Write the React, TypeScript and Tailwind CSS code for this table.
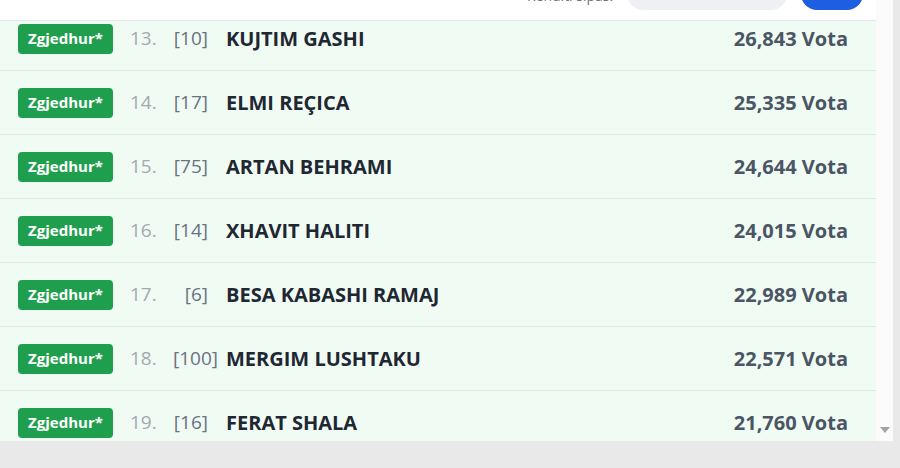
const rows = [
  { n: 13, id: 10, name: "KUJTIM GASHI", votes: "26,843" },
  { n: 14, id: 17, name: "ELMI REÇICA", votes: "25,335" },
  { n: 15, id: 75, name: "ARTAN BEHRAMI", votes: "24,644" },
  { n: 16, id: 14, name: "XHAVIT HALITI", votes: "24,015" },
  { n: 17, id: 6, name: "BESA KABASHI RAMAJ", votes: "22,989" },
  { n: 18, id: 100, name: "MERGIM LUSHTAKU", votes: "22,571" },
  { n: 19, id: 16, name: "FERAT SHALA", votes: "21,760" },
]

function Rreshti({ r }: { r: typeof rows[number] }) {
  return (
    <div className="h-[64px] shrink-0 flex items-center pl-[18px] pr-[28px] bg-[#f0fbf4] border-b border-[#dfe8e2]">
      <span className="w-[95px] h-[30px] shrink-0 rounded-[4px] bg-[#1f9f4d] text-white text-[15px] font-bold flex items-center justify-center">
        Zgjedhur*
      </span>
      <span className="ml-[17px] w-[43px] shrink-0 text-[19px] text-[#a3a9b1]">{r.n}.</span>
      {/* kolona e numrit: djathtas, por [100] del majtas-djathtas si ne origjinal */}
      <span className="inline-block w-[35px] shrink-0 text-right whitespace-nowrap text-[19px] text-[#6b7280]">[{r.id}]</span>
      <span className="ml-[18px] text-[20px] font-bold text-[#1f2733]">{r.name}</span>
      <span className="ml-auto text-[20px] font-bold text-[#4b5563]">{r.votes} Vota</span>
    </div>
  )
}

export default function App() {
  return (
    <div className="w-[900px] h-[468px] bg-[#e9e9e9] overflow-hidden" style={{ fontFamily: '"Open Sans", "Noto Sans", sans-serif' }}>
      <div className="w-[893px] h-[441px] flex bg-white overflow-hidden">
        <div className="w-[876px] h-full flex flex-col overflow-hidden">
          {/* koka e listes, e prere nga lart */}
          <div className="h-[21px] shrink-0 bg-white border-b border-[#e5e7eb] flex items-end justify-end pr-[13px] pb-[10px] gap-[14px] relative z-10">
            <span className="text-[14px] text-[#6b7280] leading-none mb-[7px]">Renditi sipas:</span>
            <span className="h-[32px] px-[18px] rounded-full bg-[#eef0f3] text-[14px] font-semibold text-[#374151] flex items-center">Numri i kandidatit</span>
            <span className="h-[32px] w-[62px] rounded-full bg-[#1d5fe0] text-[14px] font-semibold text-white flex items-center justify-center">Vota</span>
          </div>
          <div className="flex-1 overflow-hidden">
            <div className="-mt-[14px] flex flex-col">
              {rows.map(r => <Rreshti key={r.n} r={r} />)}
            </div>
          </div>
        </div>
        <div className="w-[17px] h-full bg-[#fbfbfb] flex flex-col justify-end items-center pb-[8px]">
          <svg width="10" height="6" viewBox="0 0 10 6"><path d="M0 0 L10 0 L5 6 Z" fill="#a3a3a3" /></svg>
        </div>
      </div>
    </div>
  )
}
